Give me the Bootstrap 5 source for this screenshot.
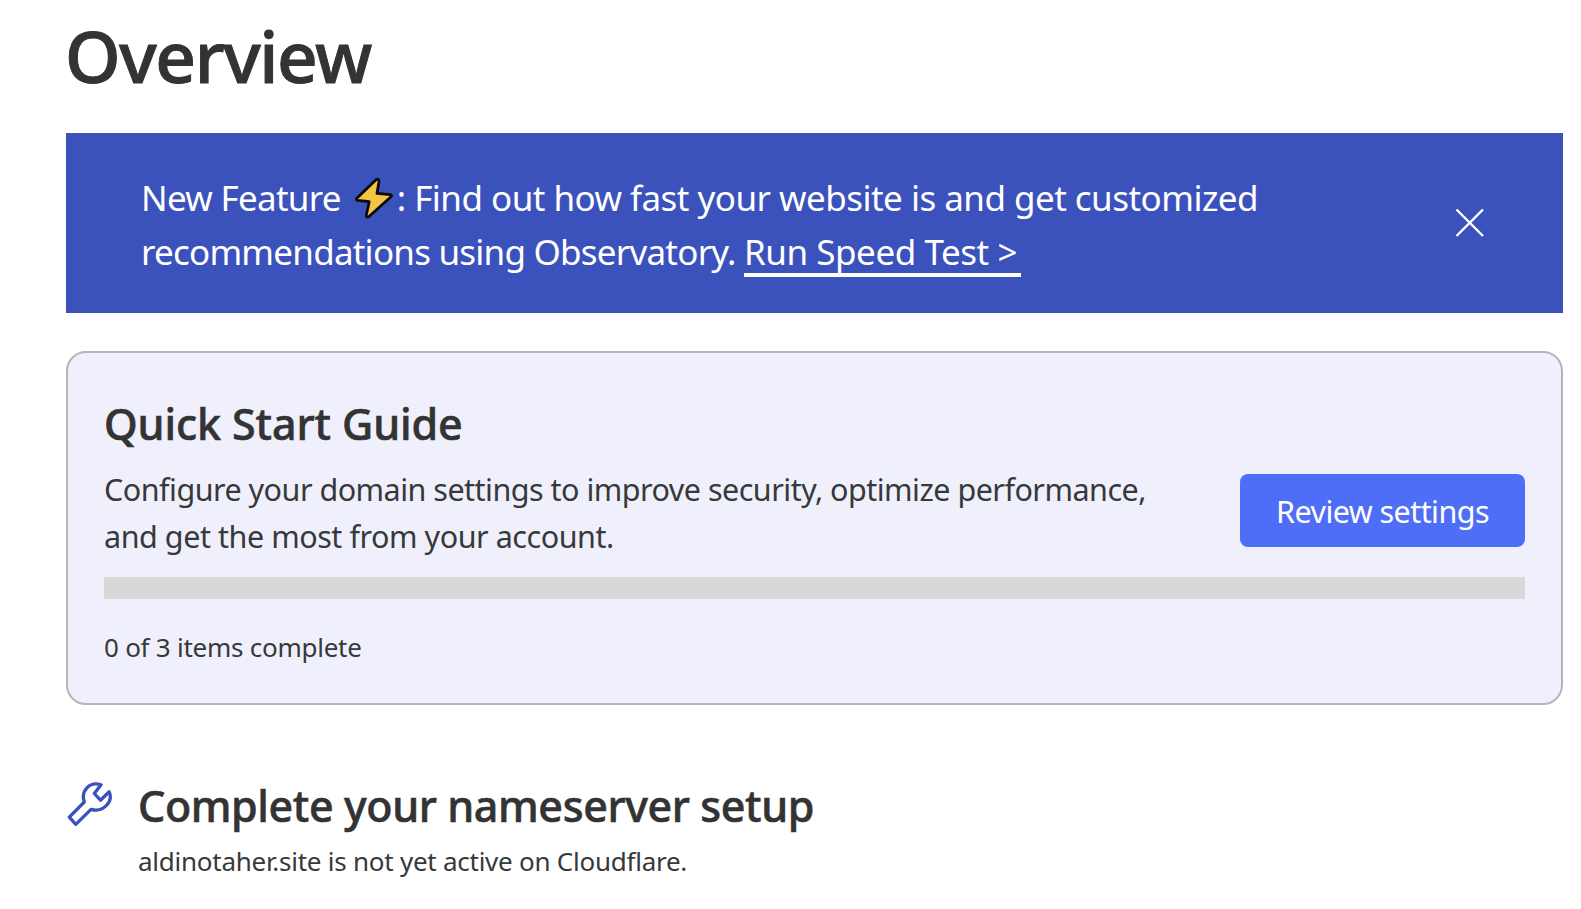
<!DOCTYPE html>
<html lang="en">
<head>
<meta charset="utf-8">
<meta name="viewport" content="width=device-width, initial-scale=1">
<title>Overview</title>
<link href="https://cdn.jsdelivr.net/npm/bootstrap@5.3.0/dist/css/bootstrap.min.css" rel="stylesheet">
<style>
  body { font-family: "Noto Sans", "Open Sans", sans-serif; color: #36393a; background: #fff; overflow: hidden; }
  .page { padding: 10px 18px 0 66px; }
  h1, h2 { font-weight: 500; color: #333; }
  .page-title { font-size: 71px; line-height: 92px; letter-spacing: -1.4px; margin: 0 0 31px -1px; -webkit-text-stroke: 1px #333; }
  .promo { background: #3b52bc; color: #fff; height: 180px; padding: 0 78px 0 75px; margin-bottom: 38px; }
  .promo-text { font-size: 35px; line-height: 54px; letter-spacing: -.53px; padding-top: 38px; white-space: nowrap; }
  .promo-lead { letter-spacing: -.7px; }
  .promo-second { letter-spacing: -.77px; }
  .promo-link { color: #fff; letter-spacing: -.45px; text-decoration: none; padding: 0 4px 2px 0; background: linear-gradient(#fff, #fff) left bottom / 100% 4px no-repeat; }
  .promo-link:hover { color: #fff; }
  .bolt { width: 40px; height: 42px; margin: 0 2.5px 0 5px; vertical-align: -8px; }
  .dismiss { line-height: 0; }
  .guide { height: 354px; border: 2px solid #b5b6ba; border-radius: 20px; background: #f0f0fc; padding: 44px 36px 0; margin-bottom: 74px; }
  .section-title { font-size: 43px; line-height: 54px; letter-spacing: -.1px; margin: 0; -webkit-text-stroke: .6px #333; }
  .guide-text { font-size: 30.5px; line-height: 47px; letter-spacing: -.51px; margin: 15px 0 0; white-space: nowrap; }
  .guide-text span { letter-spacing: -.45px; }
  .btn-review { width: 285px; height: 73px; border-radius: 8px; border: 0; background: #4f6ef7; color: #fff; font-size: 30.5px; letter-spacing: -.56px; padding: 2px 0 0; margin-bottom: 13px; }
  .btn-review:hover { background: #3f5ee8; color: #fff; }
  .guide-progress { height: 22px; border-radius: 0; background: #d8d8d8; margin: 17px 0 28px; }
  .note-text { font-size: 26px; line-height: 40px; letter-spacing: -.25px; margin: 0; }
  .setup-icon { width: 46px; height: 46px; margin: 2px 25px 0 1px; }
  .setup-title { letter-spacing: -.4px; }
</style>
</head>
<body>
<main class="page">
  <h1 class="page-title">Overview</h1>

  <section class="promo d-flex justify-content-between">
    <div class="promo-text"><span class="promo-lead">New Feature </span><svg class="bolt" viewBox="0 0 40 42" aria-hidden="true"><path d="M21.500 3.200 2.800 21.200c-.9 1-.5 2 .8 2.200l11.600 1.200-2.900 13.600c-.3 1.800 1.300 2.600 2.700 1.300L37 19.800c1-1 .6-2-.8-2.200l-13.200-1.200L25 4.500c.3-2.200-1.800-3-3.500-1.300Z" fill="#f4c445" stroke="#0b0b0b" stroke-width="2.800" stroke-linejoin="round"/></svg>: Find out how fast your website is and get customized<br><span class="promo-second">recommendations using Observatory. </span><a class="promo-link" href="#">Run Speed Test &gt;</a></div>
    <button type="button" class="dismiss btn p-0 border-0 align-self-center" aria-label="Dismiss">
      <svg width="30" height="30" viewBox="0 0 30 30" stroke="#fff" stroke-width="2.400"><path d="M1.500 1.500 28 28M28 1.500 1.500 28"/></svg>
    </button>
  </section>

  <section class="guide">
    <div class="d-flex justify-content-between align-items-end">
      <div>
        <h2 class="section-title">Quick Start Guide</h2>
        <p class="guide-text">Configure your domain settings to improve security, optimize performance,<br><span>and get the most from your account.</span></p>
      </div>
      <button type="button" class="btn btn-review">Review settings</button>
    </div>
    <div class="progress guide-progress" role="progressbar" aria-valuenow="0" aria-valuemin="0" aria-valuemax="3"></div>
    <p class="note-text">0 of 3 items complete</p>
  </section>

  <section class="d-flex align-items-start">
    <svg class="setup-icon flex-shrink-0" viewBox="0 0 46 46" fill="none" stroke="#3b52bc" stroke-width="3.300" stroke-linejoin="round" aria-hidden="true"><path d="M34 3.800C22.500-.2 13.500 10 17.300 21L2.300 36.200 8.800 43.300 24 28.300C36 31.800 46.500 21 42.200 10.800L33.500 19.200 27.300 12.500Z"/></svg>
    <div>
      <h2 class="section-title setup-title">Complete your nameserver setup</h2>
      <p class="note-text mt-2">aldinotaher.site is not yet active on Cloudflare.</p>
    </div>
  </section>
</main>
<script src="https://cdn.jsdelivr.net/npm/bootstrap@5.3.0/dist/js/bootstrap.bundle.min.js"></script>
</body>
</html>
